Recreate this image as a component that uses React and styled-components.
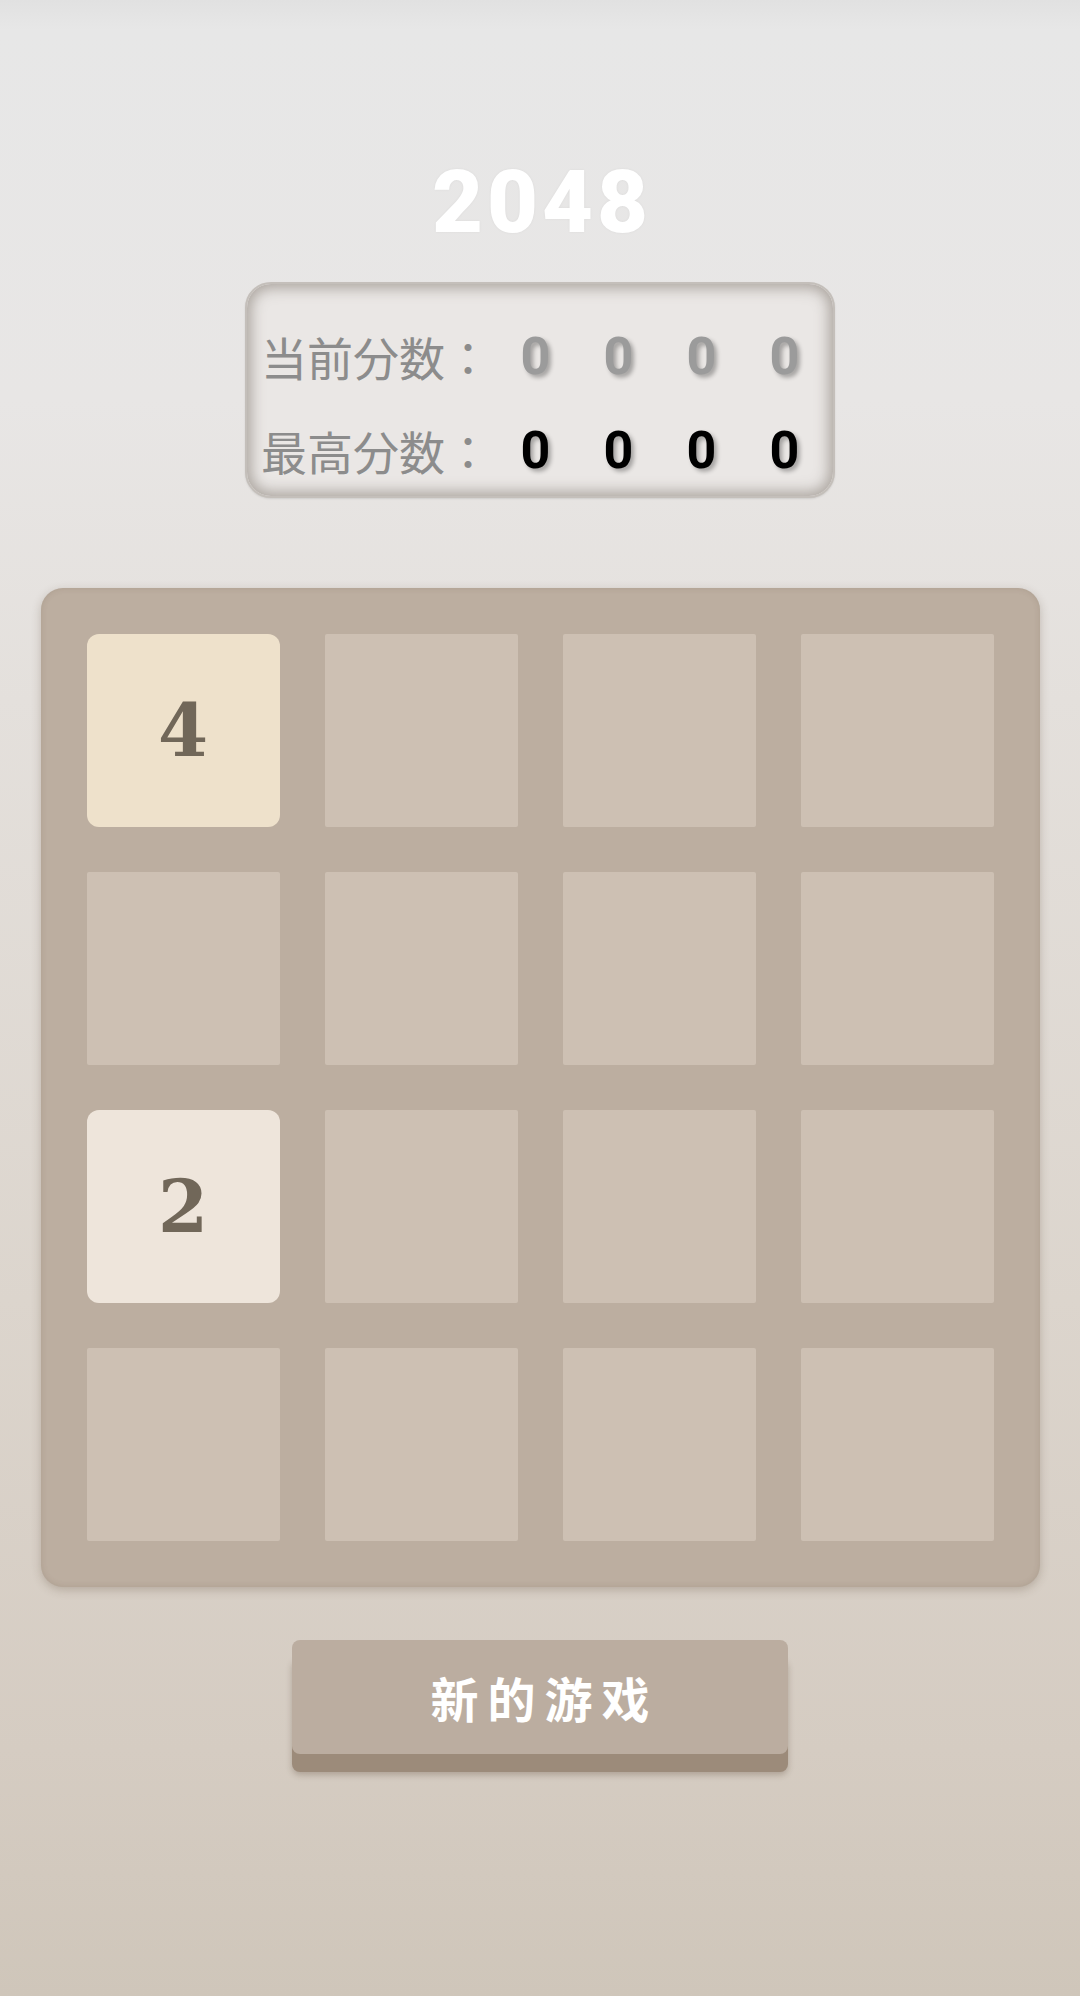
import React from "react";
import styled, { createGlobalStyle } from "styled-components";

const GlobalStyle = createGlobalStyle`
  html, body { margin: 0; padding: 0; }
  body {
    font-family: Roboto, "Noto Sans CJK SC", sans-serif;
    background: #e6e6e6;
  }
`;

const Page = styled.div`
  min-height: 1996px;
  box-sizing: border-box;
  display: flex;
  flex-direction: column;
  align-items: center;
  padding-top: 158px;
  background: linear-gradient(
    to bottom,
    #e1e1e1 0px,
    #e7e7e7 30px,
    #e8e6e5 400px,
    #e4e0dc 700px,
    #dcd5cd 1300px,
    #d5ccc2 1750px,
    #cfc6ba 1996px
  );
`;

const Title = styled.h1`
  margin: 0;
  font-family: Roboto, sans-serif;
  font-weight: 900;
  font-size: 88px;
  line-height: 1;
  letter-spacing: 4px;
  padding-left: 4px;
  color: #ffffff;
  text-shadow: 0 0 3px rgba(0, 0, 0, 0.05);
`;

const ScoreBox = styled.div`
  margin-top: 36px;
  width: 590px;
  height: 216px;
  box-sizing: border-box;
  padding: 28px 11px 2px 14px;
  display: flex;
  flex-direction: column;
  gap: 6px;
  background: #eae7e5;
  border: 2px solid #c4bfba;
  border-radius: 26px;
  box-shadow: inset 0 0 14px 4px rgba(110, 100, 90, 0.5),
    0 1px 2px rgba(0, 0, 0, 0.1);
`;

const ScoreRow = styled.div`
  height: 90px;
  display: flex;
  align-items: center;
`;

const Label = styled.span`
  width: 233px;
  flex-shrink: 0;
  font-family: "Noto Sans CJK JP", "Noto Sans CJK SC", sans-serif;
  font-size: 46px;
  color: #8c8c8c;
  white-space: nowrap;
`;

const Digits = styled.div`
  display: grid;
  grid-template-columns: repeat(4, 83px);
`;

const Digit = styled.span`
  text-align: center;
  font-family: Roboto, sans-serif;
  font-weight: 700;
  font-size: 52px;
  color: ${(p) => (p.$dim ? "#9b9b9b" : "#000000")};
  text-shadow: 3px 3px 4px rgba(0, 0, 0, 0.3);
`;

const Board = styled.div`
  margin-top: 90px;
  width: 999px;
  box-sizing: border-box;
  padding: 46px;
  display: grid;
  grid-template-columns: repeat(4, 193px);
  grid-auto-rows: 193px;
  gap: 45px;
  background: #bcaea0;
  border-radius: 22px;
  box-shadow: 0 3px 10px rgba(80, 60, 40, 0.25),
    inset 0 0 6px rgba(90, 70, 50, 0.15);
`;

const tileColors = {
  0: "#cdc0b3",
  2: "#eee5db",
  4: "#eee1cb",
};

const Tile = styled.div`
  display: flex;
  align-items: center;
  justify-content: center;
  background: ${(p) => tileColors[p.$value] || "#cdc0b3"};
  border-radius: ${(p) => (p.$value ? "12px" : "2px")};
  font-family: "DejaVu Serif", "Liberation Serif", serif;
  font-weight: 700;
  font-size: 72px;
  color: #716759;
`;

const NewGame = styled.button`
  margin-top: 53px;
  width: 496px;
  height: 114px;
  border: none;
  border-radius: 8px;
  background: #bbada0;
  color: #ffffff;
  font-family: "Noto Sans CJK SC", sans-serif;
  font-weight: 700;
  font-size: 48px;
  letter-spacing: 9px;
  padding: 0 0 0 9px;
  box-shadow: 0 18px 0 #9c8b7a, 0 21px 6px rgba(60, 40, 20, 0.25);
  cursor: pointer;
`;

const cells = [4, 0, 0, 0, 0, 0, 0, 0, 2, 0, 0, 0, 0, 0, 0, 0];

export default function App() {
  return (
    <>
      <GlobalStyle />
      <Page>
        <Title>2048</Title>
        <ScoreBox>
          <ScoreRow>
            <Label>当前分数：</Label>
            <Digits>
              {[0, 0, 0, 0].map((d, i) => (
                <Digit key={i} $dim>
                  {d}
                </Digit>
              ))}
            </Digits>
          </ScoreRow>
          <ScoreRow>
            <Label>最高分数：</Label>
            <Digits>
              {[0, 0, 0, 0].map((d, i) => (
                <Digit key={i}>{d}</Digit>
              ))}
            </Digits>
          </ScoreRow>
        </ScoreBox>
        <Board>
          {cells.map((v, i) => (
            <Tile key={i} $value={v}>
              {v ? v : ""}
            </Tile>
          ))}
        </Board>
        <NewGame>新的游戏</NewGame>
      </Page>
    </>
  );
}
